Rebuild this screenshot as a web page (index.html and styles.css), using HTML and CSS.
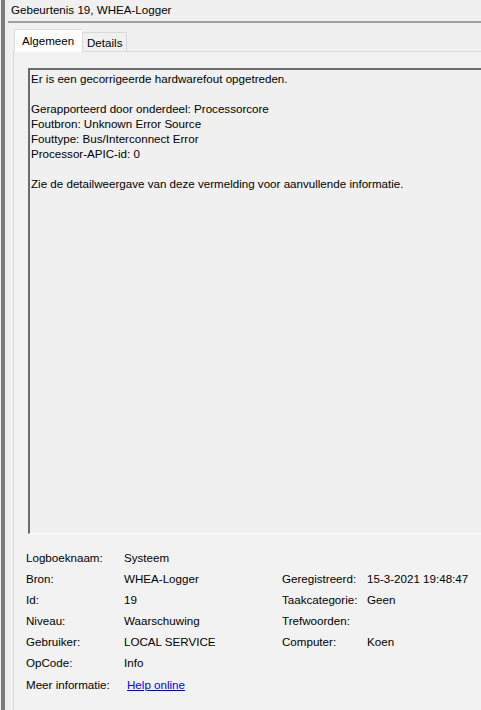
FILE: index.html
```html
<!DOCTYPE html>
<html lang="nl">
<head>
<meta charset="utf-8">
<title>Gebeurtenis 19, WHEA-Logger</title>
<link rel="stylesheet" href="styles.css">
</head>
<body>
<div class="window">
  <div class="title">Gebeurtenis 19, WHEA-Logger</div>
  <div class="tabs">
    <div class="tab active">Algemeen</div>
    <div class="tab">Details</div>
  </div>
  <div class="panel">
    <div class="message">
      <p>Er is een gecorrigeerde hardwarefout opgetreden.</p>
      <p>Gerapporteerd door onderdeel: Processorcore<br>Foutbron: Unknown Error Source<br>Fouttype: Bus/Interconnect Error<br>Processor-APIC-id: 0</p>
      <p>Zie de detailweergave van deze vermelding voor aanvullende informatie.</p>
    </div>
    <div class="props">
      <div class="lbl">Logboeknaam:</div><div class="val">Systeem</div><div></div><div></div>
      <div class="lbl">Bron:</div><div class="val">WHEA-Logger</div><div class="lbl">Geregistreerd:</div><div class="val">15-3-2021 19:48:47</div>
      <div class="lbl">Id:</div><div class="val">19</div><div class="lbl">Taakcategorie:</div><div class="val">Geen</div>
      <div class="lbl">Niveau:</div><div class="val">Waarschuwing</div><div class="lbl">Trefwoorden:</div><div class="val"></div>
      <div class="lbl">Gebruiker:</div><div class="val">LOCAL SERVICE</div><div class="lbl">Computer:</div><div class="val">Koen</div>
      <div class="lbl">OpCode:</div><div class="val">Info</div><div></div><div></div>
      <div class="lbl more">Meer informatie:</div><div class="val more"><a class="link" href="#">Help online</a></div><div></div><div></div>
    </div>
  </div>
</div>
</body>
</html>
```
FILE: styles.css
```css
html, body {
  margin: 0;
  padding: 0;
  background: #f0f0f0;
  overflow: hidden;
}
body {
  font-family: "Liberation Sans", Arial, sans-serif;
  font-size: 11.6px;
  color: #000;
  width: 481px;
  height: 710px;
}
.window {
  margin-left: 1px;
  border-left: 4px solid #7c7c7c;
  height: 710px;
  box-sizing: border-box;
  width: 480px;
  overflow: hidden;
}
.title {
  margin-left: 3px;
  padding-left: 3px;
  line-height: 20px;
  border-bottom: 2px solid #a0a0a0;
  box-sizing: border-box;
  height: 23px;
}
.tabs {
  display: flex;
  align-items: flex-end;
  margin-top: 6px;
  margin-left: 9px;
  height: 22px;
  position: relative;
  z-index: 1;
}
.tab {
  border: 1px solid #d9d9d9;
  border-bottom: none;
  background: #f0f0f0;
  height: 19px;
  line-height: 19px;
  padding: 0 4px;
  box-sizing: border-box;
}
.tab.active {
  background: #fff;
  height: 23px;
  line-height: 21px;
  padding: 0 7px;
  margin-bottom: -1px;
  border-right: none;
  width: 68px;
}
.panel {
  margin-left: 8px;
  margin-right: -40px;
  border: 1px solid #dadada;
  background: #f2f2f2;
  padding: 16px 0 0 14px;
  height: 680px;
}
.message {
  height: 466px;
  box-sizing: border-box;
  border-top: 2px solid #6b6b6b;
  border-left: 2px solid #6b6b6b;
  border-bottom: 1px solid #fdfdfd;
  background: #f0f0f0;
  padding: 1px 0 0 1px;
  line-height: 15px;
}
.message p {
  margin: 0 0 15px;
}
.props {
  display: grid;
  grid-template-columns: 98px 158px 85px 1fr;
  grid-auto-rows: 21px;
  margin-top: 13px;
  margin-left: -2px;
  line-height: 21px;
}
.val.more {
  padding-left: 3px;
}
.more {
  margin-top: 1px;
}
.link {
  color: #0000ff;
  text-decoration: underline;
}
```
